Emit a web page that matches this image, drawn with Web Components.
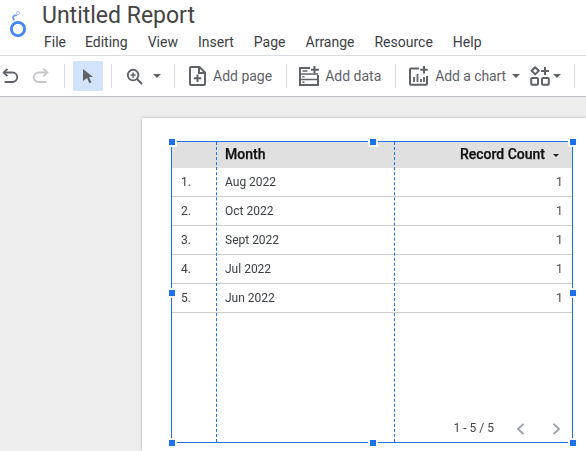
<!DOCTYPE html>
<html lang="en"><head><meta charset="utf-8"><title>Untitled Report</title>
<style>
html,body{margin:0;padding:0;height:100%;overflow:hidden;background:#eee;font-family:Roboto,"Liberation Sans",sans-serif}
</style></head><body>
<app-shell></app-shell>
<script>
const I={
undo:'<svg width="18" height="18" viewBox="0 0 18 18" fill="none" stroke="#5f6368" stroke-width="1.800"><path d="M3 5.500h8.500a4.200 4.200 0 0 1 0 9.500H3.500"/><path d="M6.500 1.800 2.600 5.500l3.900 3.700"/></svg>',
redo:'<svg width="18" height="18" viewBox="0 0 18 18" fill="none" stroke="#c4c6c9" stroke-width="1.800"><path d="M15 5.500H6.500a4.200 4.200 0 0 0 0 9.500H14.500"/><path d="M11.500 1.800l3.900 3.700-3.900 3.700"/></svg>',
cursor:'<svg width="12" height="15" viewBox="0 0 12 15"><path d="M1 0l10 8H7l2.400 5.200-2 1L5 9l-4 3z" fill="#5f6368"/></svg>',
zoom:'<svg width="17" height="17" viewBox="0 0 18 18" fill="none" stroke="#5f6368"><circle cx="7.500" cy="7.500" r="5.600" stroke-width="2"/><path d="M11.600 11.600 17 17" stroke-width="2.200"/><path d="M7.500 4.800v5.400M4.800 7.500h5.400" stroke-width="1.600"/></svg>',
page:'<svg width="17" height="20" viewBox="0 0 17 20" fill="none" stroke="#5f6368" stroke-width="2"><path d="M1 2.200A1.200 1.200 0 0 1 2.200 1H10.500l5.500 5.500V17.800A1.200 1.200 0 0 1 14.800 19H2.200A1.200 1.200 0 0 1 1 17.800z"/><path d="M10 1v6h6"/><path d="M8.500 8.500v7.500M4.800 12.200h7.500"/></svg>',
data:'<svg width="20" height="20" viewBox="0 0 20 20" fill="none" stroke="#5f6368" stroke-width="2"><path d="M11 2H1V19H19V9"/><path d="M1 8H19M1 13.500H19" stroke-width="1.700"/><path d="M3.500 5h5M3.500 10.800h2M3.500 16.300h2" stroke-width="1.500"/><path d="M15.500 0v7.500M12 3.700h8" stroke-width="2"/></svg>',
chart:'<svg width="20" height="20" viewBox="0 0 20 20" fill="none" stroke="#5f6368" stroke-width="2"><path d="M10 2.500H2A1 1 0 0 0 1 3.500V17.800A1 1 0 0 0 2 18.800H17A1 1 0 0 0 18 17.800V10"/><path d="M5 16v-5M8.500 16V8M12 16v-3M15 16v-5" stroke-width="1.800"/><path d="M15 0v7.500M11.300 3.700h7.500"/></svg>',
shapes:'<svg width="20" height="20" viewBox="0 0 20 20" fill="none" stroke="#5f6368" stroke-width="2"><path d="M5.200 1.200l3.600 3.600-3.600 3.600-3.600-3.600z" stroke-linejoin="round"/><path d="M15 1v8M11 5h8"/><rect x="1.200" y="12" width="6.800" height="6.800" rx="1"/><rect x="12" y="12" width="6.800" height="6.800" rx="1"/></svg>',
left:'<svg width="9" height="12" viewBox="0 0 9 12" fill="none" stroke="#9aa0a6" stroke-width="1.800"><path d="M7.500 .8 2 6l5.500 5.200"/></svg>',
right:'<svg width="9" height="12" viewBox="0 0 9 12" fill="none" stroke="#9aa0a6" stroke-width="1.800"><path d="M1.500 .8 7 6l-5.500 5.200"/></svg>'
};
const def=(n,html)=>customElements.define(n,class extends HTMLElement{constructor(){super();this.attachShadow({mode:'open'}).innerHTML=typeof html==='function'?html(this):html}});

def('app-logo',`<style>:host{display:block;width:18px;height:28px}svg{display:block}</style>
<svg width="18" height="28" viewBox="0 0 18 28" fill="none"><circle cx="9" cy="19" r="6.600" stroke="#4285f4" stroke-width="2.800"/><path d="M8 5.800A2.600 2.600 0 0 0 4 7.800c0 1 .6 1.800 1.500 2.300" stroke="#669df6" stroke-width="1.800"/><circle cx="9" cy="3" r="1.500" stroke="#a8c7fa" stroke-width="1.100"/></svg>`);

def('menu-bar',`<style>:host{display:flex;height:20px;font:14px/20px Roboto,"Liberation Sans",sans-serif;color:#3c4043}
::slotted(span){white-space:nowrap}</style><slot></slot>`);

def('app-header',`<style>:host{display:flex;height:55px;background:#fff;border-bottom:1px solid #dadce0}
.logo{padding:10px 0 0 9px;width:42px;box-sizing:border-box}
.title{font:23px/28px Roboto,"Liberation Sans",sans-serif;color:#444;padding-top:2px;height:28px}
.col{display:flex;flex-direction:column;gap:2px}
</style><div class="logo"><app-logo></app-logo></div><div class="col"><div class="title"><slot name="title"></slot></div><slot></slot></div>`);

def('tool-bar',`<style>:host{display:flex;align-items:center;height:40px;background:#fff;border-bottom:1px solid #bdc1c6;font:14px Roboto,"Liberation Sans",sans-serif;color:#5f6368}</style><slot></slot>`);

def('tool-sep',`<style>:host{display:block;width:1px;height:24px;background:#dadce0;margin-left:var(--l,0)}</style>`);

def('tool-item',`<style>:host{display:flex;align-items:center;height:30px;white-space:nowrap;margin-left:var(--l,0)}
:host([sel]){background:#d2e3fc;border-radius:2px;width:30px;justify-content:center}
</style><slot></slot>`);

def('tool-caret',`<style>:host{display:block;width:0;height:0;border:4px solid transparent;border-top-color:#5f6368;border-bottom:0;margin-left:var(--l,0)}</style>`);

def('data-table',`<style>:host{display:block;position:relative;box-sizing:border-box;width:402px;height:302px;border:1px solid #1a73e8;font:12px Roboto,"Liberation Sans",sans-serif;color:#3c4043;margin-left:29px;will-change:opacity}
.head{display:grid;grid-template-columns:44px 178px 1fr;height:26px;background:#e0e0e0;font:500 14px/25px Roboto,"Liberation Sans",sans-serif;color:#111;-webkit-text-stroke:.25px #111}
.m{padding-left:9px}
.r{padding-right:13px;display:flex;justify-content:flex-end;align-items:center;gap:8px;height:25px}
.c{width:0;height:0;border:3px solid transparent;border-top-color:#202124;border-bottom:0;margin-top:1px}
.foot{position:absolute;right:11px;bottom:7px;display:flex;align-items:center;font-size:12px;color:#444}
.foot svg{display:block}
.t{margin-top:-3px}
.dash{position:absolute;top:0;bottom:0;width:0;border-left:1px dashed #1a73e8}
.h{position:absolute;width:6px;height:6px;background:#1a73e8;box-shadow:0 0 0 2px #fff}
</style>
<div class="head"><div></div><div class="m">Month</div><div class="r">Record Count<span class="c"></span></div></div>
<slot></slot>
<div class="foot"><span class="t">1 - 5 / 5</span><span style="margin-left:22px">${I.left}</span><span style="margin-left:27px">${I.right}</span></div>
<div class="dash" style="left:44px"></div><div class="dash" style="left:222px"></div>
<div class="h" style="left:-3px;top:-3px"></div><div class="h" style="left:198px;top:-3px"></div><div class="h" style="right:-4px;top:-3px"></div>
<div class="h" style="left:-3px;top:148px"></div><div class="h" style="right:-4px;top:148px"></div>
<div class="h" style="left:-3px;bottom:-4px"></div><div class="h" style="left:198px;bottom:-4px"></div><div class="h" style="right:-4px;bottom:-4px"></div>`);

def('table-row',el=>`<style>:host{display:grid;grid-template-columns:44px 178px 1fr;height:29px;box-sizing:border-box;border-bottom:1px solid #ccc;line-height:28px;font-size:12px;color:#3c4043}
.n{padding-left:9px}.m{padding-left:9px}.v{text-align:right;padding-right:9px;font-size:13px;color:#555}</style>
<div class="n">${el.getAttribute('n')}.</div><div class="m"><slot></slot></div><div class="v">1</div>`);

def('report-page',`<style>:host{display:block;background:#fff;margin-left:142px;padding:23px 0 0;height:333px;box-sizing:border-box;box-shadow:0 0 3px rgba(0,0,0,.25)}</style><slot></slot>`);

def('app-shell',`<style>:host{display:block;width:586px;height:451px;overflow:hidden;background:#eee}
.canvas{padding-top:21px}</style>
<app-header><span slot="title">Untitled Report</span>
<menu-bar>
<span style="margin-left:2px">File</span><span style="margin-left:19px">Editing</span><span style="margin-left:20px">View</span><span style="margin-left:20px">Insert</span><span style="margin-left:20px">Page</span><span style="margin-left:20px">Arrange</span><span style="margin-left:20px">Resource</span><span style="margin-left:20px">Help</span>
</menu-bar></app-header>
<tool-bar>
<tool-item style="--l:1px">${I.undo}</tool-item>
<tool-item style="--l:13px">${I.redo}</tool-item>
<tool-sep style="--l:14px"></tool-sep>
<tool-item sel style="--l:8px">${I.cursor}</tool-item>
<tool-sep style="--l:8px"></tool-sep>
<tool-item style="--l:14px">${I.zoom}</tool-item>
<tool-caret style="--l:10px"></tool-caret>
<tool-sep style="--l:13px"></tool-sep>
<tool-item style="--l:14px">${I.page}</tool-item>
<tool-item style="--l:7px">Add page</tool-item>
<tool-sep style="--l:14px"></tool-sep>
<tool-item style="--l:12px">${I.data}</tool-item>
<tool-item style="--l:6px">Add data</tool-item>
<tool-sep style="--l:14px"></tool-sep>
<tool-item style="--l:13px">${I.chart}</tool-item>
<tool-item style="--l:6px;letter-spacing:-.1px">Add a chart</tool-item>
<tool-caret style="--l:6px"></tool-caret>
<tool-item style="--l:10px">${I.shapes}</tool-item>
<tool-caret style="--l:3px"></tool-caret>
<tool-sep style="--l:13px"></tool-sep>
</tool-bar>
<div class="canvas"><report-page><data-table>
<table-row n="1">Aug 2022</table-row>
<table-row n="2">Oct 2022</table-row>
<table-row n="3">Sept 2022</table-row>
<table-row n="4">Jul 2022</table-row>
<table-row n="5">Jun 2022</table-row>
</data-table></report-page></div>`);
</script></body></html>
